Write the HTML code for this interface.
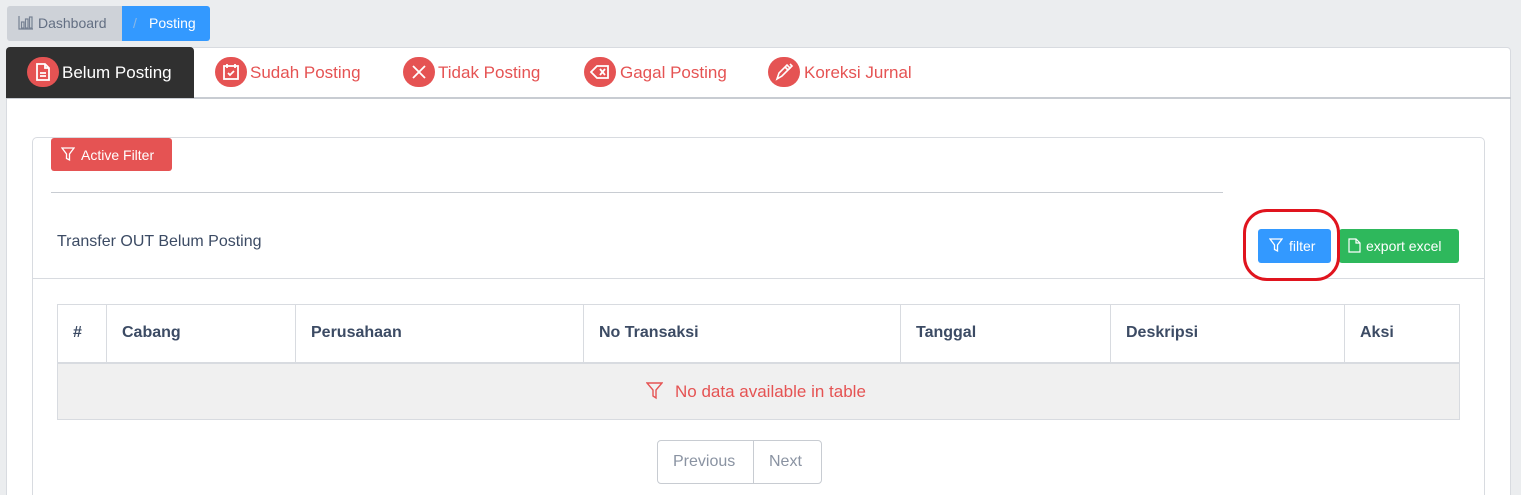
<!DOCTYPE html>
<html><head><meta charset="utf-8"><style>
*{box-sizing:border-box;margin:0;padding:0}
html,body{width:1521px;height:495px;overflow:hidden}
body{background:#ebedef;font-family:"Liberation Sans",sans-serif;position:relative}
.a{position:absolute}
.ic{position:absolute;width:32px;height:30px;border-radius:15px;background:#e55353;top:57px}
.ic svg{position:absolute;left:6px;top:5px}
.tab{position:absolute;top:63px;font-size:17px;color:#e55353}
.th{position:absolute;top:324px;font-size:16px;font-weight:bold;color:#3c4b64}
.vl{position:absolute;top:304px;width:1px;height:58px;background:#d8dbe0}
</style></head><body>
<div class="a" style="left:7px;top:6px;width:115px;height:35px;background:#ced2d8;border-radius:3px 0 0 3px"></div>
<svg class="a" style="left:18px;top:16px" width="15" height="14" viewBox="0 0 15 14" fill="none" stroke="#768192" stroke-width="1.2"><path d="M1 0v13h14"/><rect x="3.5" y="6" width="2.5" height="6"/><rect x="7.5" y="3" width="2.5" height="9"/><rect x="11.5" y="1" width="2.5" height="11"/></svg>
<div class="a" style="left:38px;top:15px;font-size:14px;color:#636f83">Dashboard</div>
<div class="a" style="left:122px;top:6px;width:88px;height:35px;background:#3399ff;border-radius:0 3px 3px 0"></div>
<div class="a" style="left:133px;top:15px;font-size:14px;color:#8ab8e6">/</div>
<div class="a" style="left:149px;top:15px;font-size:14px;color:#fff">Posting</div>

<div class="a" style="left:6px;top:47px;width:1505px;height:460px;background:#fff;border:1px solid #d8dbe0;border-radius:4px"></div>
<div class="a" style="left:6px;top:97px;width:1505px;height:2px;background:#c8ccd2"></div>
<div class="a" style="left:6px;top:47px;width:188px;height:51px;background:#303030;border-radius:4px 4px 0 0"></div>

<div class="ic" style="left:27px"><svg width="20" height="20" viewBox="0 0 20 20" fill="none" stroke="#fff" stroke-width="1.8"><path d="M4 2h8l4 4v12H4z"/><path d="M12 2v4h4M7 11h6M7 14h6"/></svg></div>
<div class="tab" style="left:62px;color:#fff">Belum Posting</div>
<div class="ic" style="left:215px"><svg width="20" height="20" viewBox="0 0 20 20" fill="none" stroke="#fff" stroke-width="1.8"><rect x="3" y="4" width="14" height="13"/><path d="M6 2v4M14 2v4M7 11l2 2 4-4"/></svg></div>
<div class="tab" style="left:250px">Sudah Posting</div>
<div class="ic" style="left:403px"><svg width="20" height="20" viewBox="0 0 20 20" fill="none" stroke="#fff" stroke-width="1.8"><path d="M4 4l12 12M16 4L4 16"/></svg></div>
<div class="tab" style="left:438px">Tidak Posting</div>
<div class="ic" style="left:584px"><svg width="20" height="20" viewBox="0 0 20 20" fill="none" stroke="#fff" stroke-width="1.8"><path d="M7 4h11v12H7L1 10z"/><path d="M10 7l5 6M15 7l-5 6"/></svg></div>
<div class="tab" style="left:620px">Gagal Posting</div>
<div class="ic" style="left:768px"><svg width="20" height="20" viewBox="0 0 20 20" fill="none" stroke="#fff" stroke-width="1.6"><path d="M3 17l2-6 8-8 3 3-8 8z"/><path d="M11 5l3 3M16 2l2 2-3 3"/></svg></div>
<div class="tab" style="left:804px">Koreksi Jurnal</div>

<div class="a" style="left:32px;top:137px;width:1453px;height:380px;border:1px solid #d8dbe0;border-radius:5px"></div>
<div class="a" style="left:51px;top:138px;width:121px;height:33px;background:#e55353;border-radius:3px"></div>
<svg class="a" style="left:61px;top:147px" width="14" height="15" viewBox="0 0 14 15" fill="none" stroke="#fff" stroke-width="1.3"><path d="M1 1h12L8.5 7v6l-3-1.5V7z"/></svg>
<div class="a" style="left:81px;top:147px;font-size:14px;color:#fff">Active Filter</div>
<div class="a" style="left:51px;top:192px;width:1172px;height:1px;background:#c8ccd2"></div>
<div class="a" style="left:57px;top:233px;font-size:16px;color:#3c4b64">Transfer OUT Belum Posting</div>
<div class="a" style="left:33px;top:278px;width:1451px;height:1px;background:#d8dbe0"></div>

<div class="a" style="left:1258px;top:229px;width:73px;height:34px;background:#3399ff;border-radius:3px"></div>
<svg class="a" style="left:1269px;top:238px" width="14" height="15" viewBox="0 0 14 15" fill="none" stroke="#fff" stroke-width="1.3"><path d="M1 1h12L8.5 7v6l-3-1.5V7z"/></svg>
<div class="a" style="left:1289px;top:238px;font-size:14px;color:#fff">filter</div>
<div class="a" style="left:1339px;top:229px;width:120px;height:34px;background:#2eb85c;border-radius:3px"></div>
<svg class="a" style="left:1348px;top:238px" width="13" height="15" viewBox="0 0 13 15" fill="none" stroke="#fff" stroke-width="1.2"><path d="M1 1h7l4 4v9H1z"/><path d="M8 1v4h4"/></svg>
<div class="a" style="left:1366px;top:238px;font-size:14px;color:#fff">export excel</div>
<div class="a" style="left:1243px;top:209px;width:97px;height:72px;border:3px solid #e0141e;border-radius:24px"></div>

<div class="a" style="left:57px;top:304px;width:1403px;height:116px;border:1px solid #d8dbe0"></div>
<div class="a" style="left:58px;top:362px;width:1401px;height:57px;background:#f0f0f0;border-top:2px solid #d8dbe0"></div>
<div class="vl" style="left:106px"></div><div class="vl" style="left:295px"></div><div class="vl" style="left:583px"></div><div class="vl" style="left:900px"></div><div class="vl" style="left:1110px"></div><div class="vl" style="left:1344px"></div>
<div class="th" style="left:73px">#</div>
<div class="th" style="left:122px">Cabang</div>
<div class="th" style="left:311px">Perusahaan</div>
<div class="th" style="left:599px">No Transaksi</div>
<div class="th" style="left:916px">Tanggal</div>
<div class="th" style="left:1126px">Deskripsi</div>
<div class="th" style="left:1360px">Aksi</div>
<svg class="a" style="left:646px;top:382px" width="17" height="18" viewBox="0 0 17 18" fill="none" stroke="#e55353" stroke-width="1.4"><path d="M1 1h15l-6 7v8l-3-2V8z"/></svg>
<div class="a" style="left:675px;top:382px;font-size:17px;color:#e55353">No data available in table</div>

<div class="a" style="left:657px;top:440px;width:165px;height:44px;border:1px solid #c8ccd2;border-radius:4px"></div>
<div class="a" style="left:753px;top:440px;width:1px;height:44px;background:#c8ccd2"></div>
<div class="a" style="left:673px;top:453px;font-size:16px;color:#8a93a2">Previous</div>
<div class="a" style="left:769px;top:453px;font-size:16px;color:#8a93a2">Next</div>
</body></html>
